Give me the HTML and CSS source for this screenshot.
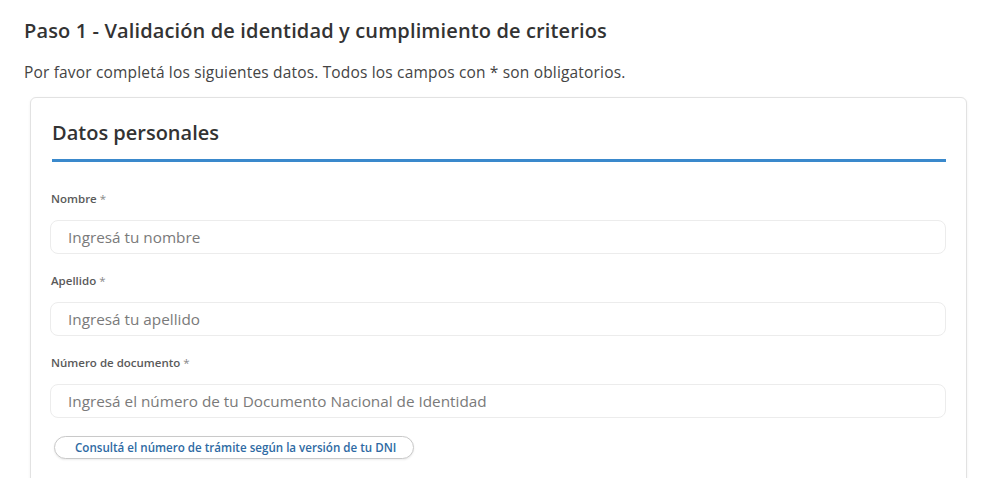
FILE: index.html
```html
<!DOCTYPE html>
<html lang="es">
<head>
<meta charset="utf-8">
<title>Paso 1</title>
<link rel="stylesheet" href="styles.css">
</head>
<body>
<main class="page">
  <h1 class="step-title">Paso 1 - Validación de identidad y cumplimiento de criterios</h1>
  <p class="step-intro">Por favor completá los siguientes datos. Todos los campos con * son obligatorios.</p>
  <section class="card">
    <h2 class="card-title">Datos personales</h2>
    <div class="fields">
      <div class="field">
        <label class="field-label" for="nombre">Nombre <span class="req">*</span></label>
        <input class="field-input" id="nombre" type="text" placeholder="Ingresá tu nombre">
      </div>
      <div class="field">
        <label class="field-label" for="apellido">Apellido <span class="req">*</span></label>
        <input class="field-input" id="apellido" type="text" placeholder="Ingresá tu apellido">
      </div>
      <div class="field">
        <label class="field-label" for="dni">Número de documento <span class="req">*</span></label>
        <input class="field-input" id="dni" type="text" placeholder="Ingresá el número de tu Documento Nacional de Identidad">
      </div>
      <div class="field-help">
        <button class="pill-btn" type="button">Consultá el número de trámite según la versión de tu DNI</button>
      </div>
    </div>
  </section>
</main>
</body>
</html>
```
FILE: styles.css
```css
* { box-sizing: border-box; }
html, body { margin: 0; padding: 0; background: #fff; }
body {
  font-family: "Open Sans", "Noto Sans", sans-serif;
  color: #333;
  overflow: hidden;
}
.page {
  padding: 17px 25px 0 24px;
}
.step-title {
  margin: 0;
  font-size: 20px;
  line-height: 28px;
  font-weight: 600;
  color: #333;
  letter-spacing: 0.13px;
}
.step-intro {
  margin: 16px 0 0;
  font-size: 15.5px;
  line-height: 22px;
  color: #444;
  letter-spacing: 0.17px;
}
.card {
  margin: 14px 0 0 6px;
  border: 1px solid #e2e2e2;
  border-radius: 6px;
  box-shadow: 0 1px 3px rgba(0,0,0,0.06);
  padding: 20px 20px 40px 19px;
  background: #fff;
}
.card-title {
  margin: 0 0 28px 2px;
  font-size: 20px;
  line-height: 30px;
  font-weight: 600;
  color: #333;
  padding-bottom: 11px;
  border-bottom: 3px solid #3a89cc;
}
.fields { display: flex; flex-direction: column; gap: 18px; }
.field { display: flex; flex-direction: column; gap: 12px; }
.field-label {
  font-size: 11.5px;
  line-height: 18px;
  color: #5a5a5a;
  font-weight: 600;
  padding-left: 1px;
}
.req { color: #888; font-weight: 400; }
.field-input {
  width: 100%;
  height: 34px;
  border: 1px solid #ececec;
  border-radius: 8px;
  padding: 0 17px;
  font-family: inherit;
  font-size: 15.3px;
  color: #333;
  background: #fff;
  outline: none;
}
.field-input::placeholder { color: #7a7a7a; font-weight: 400; }
.field-help { margin-top: -1px; padding-left: 4px; }
.pill-btn {
  height: 23px;
  padding: 0 17px 0 20px;
  border: 1px solid #c9c9c9;
  border-radius: 12px;
  background: #fff;
  font-family: inherit;
  font-size: 11.6px;
  font-weight: 600;
  color: #2e6aa3;
  box-shadow: 0 1px 2px rgba(0,0,0,0.08);
}
```
